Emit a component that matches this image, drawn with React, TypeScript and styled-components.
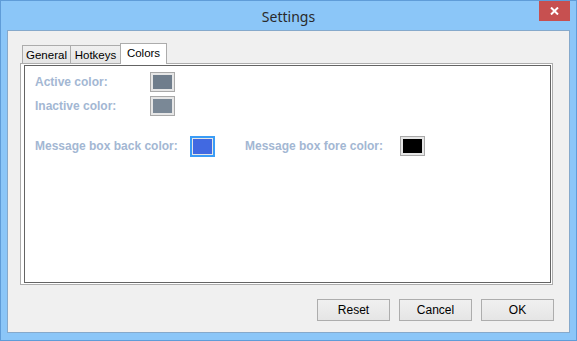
import React from "react";
import styled, { createGlobalStyle } from "styled-components";

const Global = createGlobalStyle`
  html, body { margin: 0; padding: 0; background: #ffffff; }
  body { font-family: "Liberation Sans", Arial, sans-serif; }
  * { box-sizing: border-box; }
`;

const Frame = styled.div`
  width: 577px;
  height: 341px;
  border: 1px solid #5f9cd8;
  background: #8bc6f8;
  padding: 0 6px 7px 6px;
  display: flex;
  flex-direction: column;
`;

const TitleBar = styled.div`
  height: 29px;
  position: relative;
  display: flex;
  align-items: center;
  justify-content: center;
`;

const Title = styled.div`
  font-family: "Noto Sans", "Open Sans", sans-serif;
  font-size: 14px;
  color: #2a2a2a;
  margin-top: 2px;
`;

const CloseButton = styled.div`
  position: absolute;
  right: 0;
  top: 0;
  width: 31px;
  height: 20px;
  background: #c75050;
  display: flex;
  align-items: center;
  justify-content: center;
`;

const Client = styled.div`
  flex: 1;
  border: 1px solid #86a9cb;
  background: #f0f0f0;
  padding: 12px 15px 11px 12px;
  display: flex;
  flex-direction: column;
`;

const TabStrip = styled.div`
  height: 20px;
  padding-left: 2px;
  display: flex;
  align-items: flex-end;
`;

const Tab = styled.div<{ $active?: boolean; $w: number }>`
  width: ${(p) => p.$w}px;
  height: ${(p) => (p.$active ? 21 : 18)}px;
  margin-bottom: ${(p) => (p.$active ? -1 : 0)}px;
  margin-right: -1px;
  position: relative;
  z-index: ${(p) => (p.$active ? 2 : 1)};
  border: 1px solid #acacac;
  border-bottom: none;
  background: ${(p) =>
    p.$active ? "#ffffff" : "linear-gradient(#f0f0f0, #e5e5e5)"};
  font-size: 11.5px;
  color: #000;
  display: flex;
  align-items: ${(p) => (p.$active ? "flex-start" : "center")};
  padding-top: ${(p) => (p.$active ? 3 : 0)}px;
  justify-content: center;
`;

const Panel = styled.div`
  width: 533px;
  height: 222px;
  border: 1px solid #adadad;
  background: #ffffff;
  padding: 1px 1px 1px 3px;
`;

const InnerBox = styled.div`
  height: 100%;
  border: 1px solid #646464;
  padding: 6px 0 0 10px;
  display: flex;
  flex-direction: column;
`;

const Row = styled.div<{ $gap: number }>`
  display: flex;
  align-items: center;
  height: 20px;
  margin-top: ${(p) => p.$gap}px;
`;

const Label = styled.div<{ $w: number }>`
  width: ${(p) => p.$w}px;
  flex: none;
  font-size: 12px;
  font-weight: bold;
  color: #a3b7d3;
  white-space: nowrap;
`;

const Swatch = styled.div<{ $color: string; $focused?: boolean }>`
  width: 25px;
  height: ${(p) => (p.$focused ? 21 : 20)}px;
  flex: none;
  border: ${(p) => (p.$focused ? "2px solid #3a9cf6" : "1px solid #a9a9a9")};
  background: #e6e6e6;
  padding: ${(p) => (p.$focused ? 1 : 2)}px;
  &::after {
    content: "";
    display: block;
    width: 100%;
    height: 100%;
    background: ${(p) => p.$color};
  }
`;

const Spacer = styled.div<{ $w: number }>`
  width: ${(p) => p.$w}px;
  flex: none;
`;

const ButtonRow = styled.div`
  margin-top: 14px;
  display: flex;
  justify-content: flex-end;
  gap: 9px;
`;

const Button = styled.div`
  width: 73px;
  height: 22px;
  border: 1px solid #adadad;
  background: linear-gradient(#f0f0f0, #e5e5e5);
  font-size: 12px;
  color: #000;
  display: flex;
  align-items: center;
  justify-content: center;
`;

export default function App() {
  return (
    <>
      <Global />
      <Frame>
        <TitleBar>
          <Title>Settings</Title>
          <CloseButton>
            <svg width="9" height="8" viewBox="0 0 9 8">
              <path d="M1 0.5 L8 7.5 M8 0.5 L1 7.5" stroke="#ffffff" strokeWidth="2" />
            </svg>
          </CloseButton>
        </TitleBar>
        <Client>
          <TabStrip>
            <Tab $w={49}>General</Tab>
            <Tab $w={51}>Hotkeys</Tab>
            <Tab $w={47} $active>
              Colors
            </Tab>
          </TabStrip>
          <Panel>
            <InnerBox>
              <Row $gap={0}>
                <Label $w={115}>Active color:</Label>
                <Swatch $color="#6f7d8c" />
              </Row>
              <Row $gap={4}>
                <Label $w={115}>Inactive color:</Label>
                <Swatch $color="#7a8896" />
              </Row>
              <Row $gap={20}>
                <Label $w={155}>Message box back color:</Label>
                <Swatch $color="#4169e1" $focused />
                <Spacer $w={30} />
                <Label $w={155}>Message box fore color:</Label>
                <Swatch $color="#000000" />
              </Row>
            </InnerBox>
          </Panel>
          <ButtonRow>
            <Button>Reset</Button>
            <Button>Cancel</Button>
            <Button>OK</Button>
          </ButtonRow>
        </Client>
      </Frame>
    </>
  );
}
